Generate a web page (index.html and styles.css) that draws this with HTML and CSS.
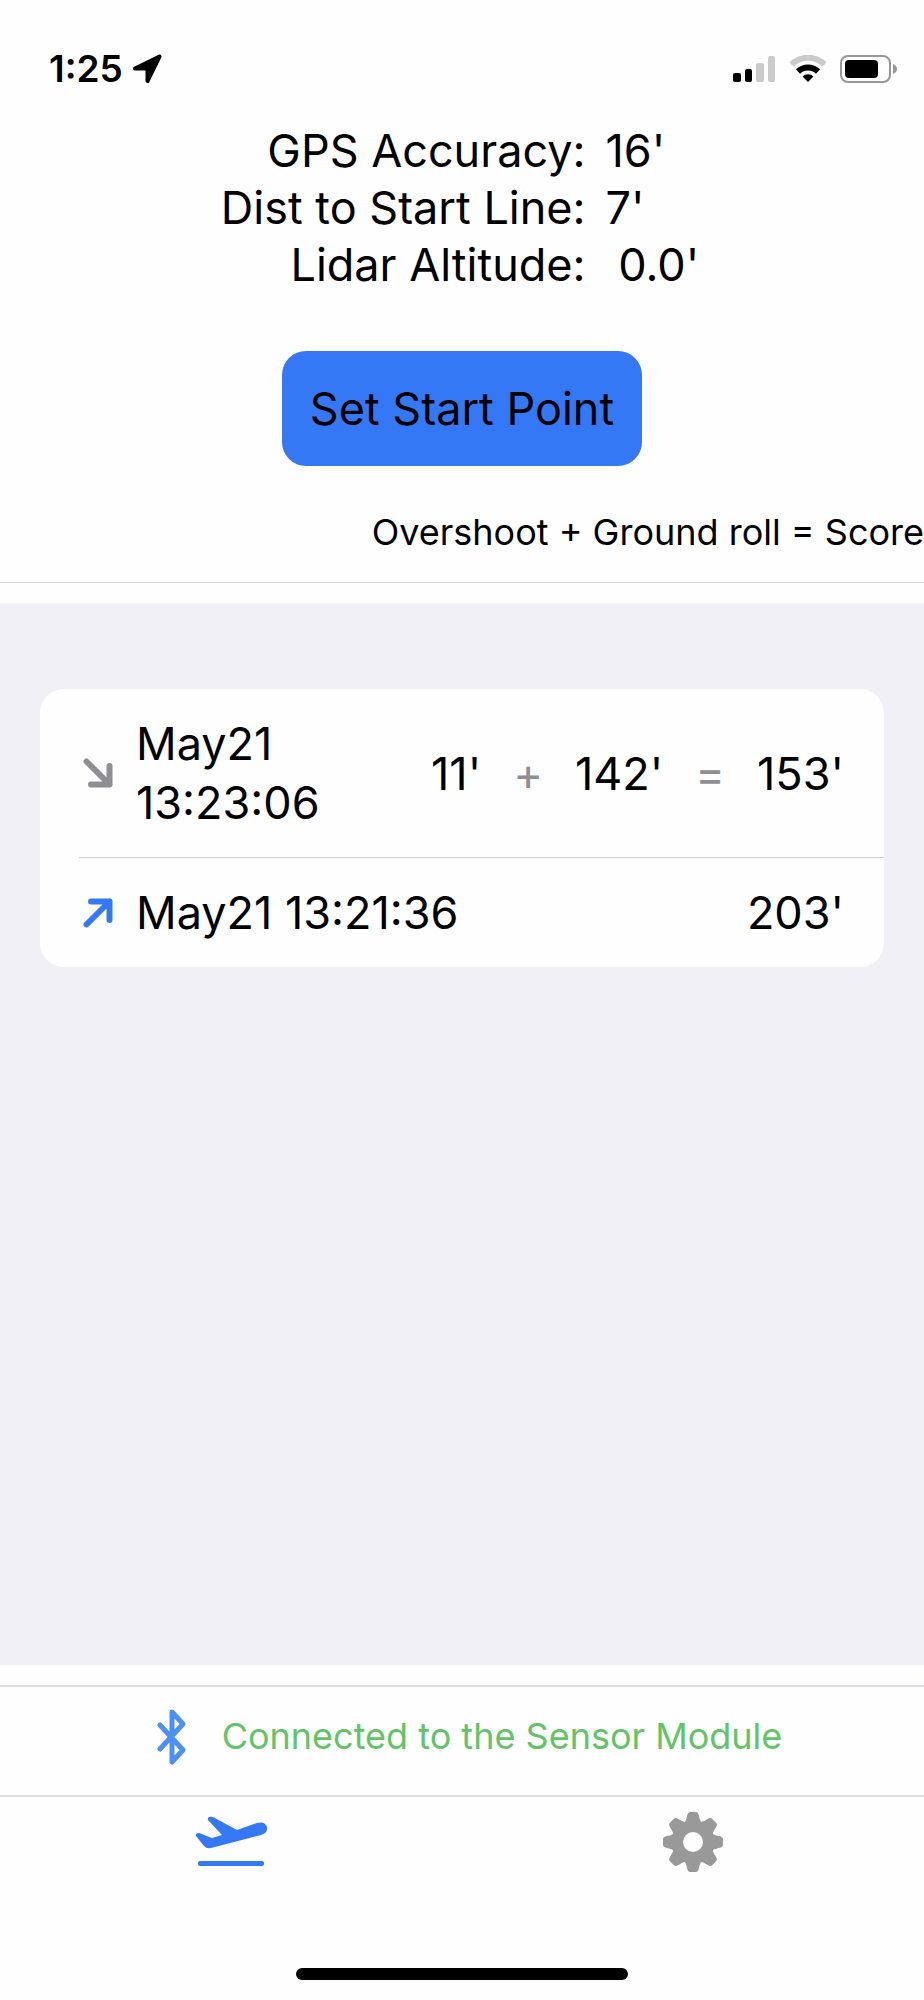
FILE: index.html
```html
<!DOCTYPE html>
<html lang="en">
<head>
  <meta charset="UTF-8">
  <meta name="viewport" content="width=device-width, initial-scale=1.0">
  <title>Landing Distance</title>
  <link rel="stylesheet" href="styles.css">
</head>
<body>
  <div class="status-bar">
    <span class="time">1:25</span>
    <svg class="location" width="30" height="30" viewBox="0 0 30 30">
      <path d="M3 14.5 L27.500 2.500 L15.500 27 V14.500 Z" fill="#000" stroke="#000" stroke-width="4" stroke-linejoin="round"/>
    </svg>
    <div class="indicators">
      <svg width="43" height="28" viewBox="0 0 43 28">
        <rect x="0" y="18" width="8" height="9" rx="2"/>
        <rect x="12" y="14" width="7" height="13" rx="2"/>
        <rect x="23" y="8" width="8" height="19" rx="2" fill="#cbcbcb"/>
        <rect x="35" y="1" width="7" height="26" rx="2" fill="#cbcbcb"/>
      </svg>
      <svg width="38" height="28" viewBox="0 0 38 28" fill="none">
        <path d="M2.500 9.500 A23.500 23.500 0 0 1 35.500 9.500" stroke="#cbcbcb" stroke-width="6"/>
        <path d="M9 16.500 A14.500 14.500 0 0 1 29 16.500" stroke="#000" stroke-width="6"/>
        <path d="M13.500 21.500 A8 8 0 0 1 24.500 21.500 L19 27 Z" fill="#000"/>
      </svg>
      <svg width="57" height="28" viewBox="0 0 57 28">
        <rect x="1" y="1" width="49" height="26" rx="7" fill="none" stroke="#979797" stroke-width="2"/>
        <rect x="5" y="5" width="33" height="18" rx="4"/>
        <path d="M53 9 Q57 11 57 14 Q57 17 53 19 Z" fill="#979797"/>
      </svg>
    </div>
  </div>

  <header>
    <dl class="stats">
      <dt>GPS Accuracy:</dt>
      <dd>16'</dd>
      <dt>Dist to Start Line:</dt>
      <dd>7'</dd>
      <dt>Lidar Altitude:</dt>
      <dd> 0.0'</dd>
    </dl>
    <button class="start-button">Set Start Point</button>
    <p class="formula">Overshoot + Ground roll = Score</p>
  </header>

  <main>
    <ul class="records">
      <li>
        <svg class="arrow landing" width="30" height="30" viewBox="0 0 30 30">
          <path d="M3.500 3.500 L26.500 26.500 M26.500 8 V26.500 H8"/>
        </svg>
        <span class="date">May21 13:23:06</span>
        <span class="value">11'</span>
        <span class="sign">+</span>
        <span class="value">142'</span>
        <span class="sign">=</span>
        <span class="value">153'</span>
      </li>
      <li>
        <svg class="arrow takeoff" width="30" height="30" viewBox="0 0 30 30">
          <path d="M3.500 26.500 L26.500 3.500 M8 3.500 H26.500 V22"/>
        </svg>
        <span class="date">May21 13:21:36</span>
        <span class="value">203'</span>
      </li>
    </ul>
  </main>

  <div class="connection">
    <svg width="32" height="56" viewBox="0 0 32 56">
      <path d="M4 16 L27 41 L16 53 V3 L27 15 L4 40" fill="none" stroke="#4a90f8" stroke-width="5" stroke-linecap="round" stroke-linejoin="round"/>
    </svg>
    <span>Connected to the Sensor Module</span>
  </div>

  <nav>
    <a href="#flights" aria-label="Flights">
      <svg width="72" height="60" viewBox="0 0 72 60">
        <path d="M1 24 Q0 21 4 21 L17 26 L27 23 L13 8 Q12 4 18 5 L42 18 L62 11 Q70 9 72 15 Q73 21 66 23 L16 36 Q12 37 9 34 Z" fill="#3478f6"/>
        <rect x="3" y="49" width="66" height="5" rx="2" fill="#3478f6"/>
      </svg>
    </a>
    <a href="#settings" aria-label="Settings">
      <svg width="60" height="60" viewBox="-30 -30 60 60">
        <g fill="#999">
          <path id="tooth" d="M-10 -18 Q-7 -20 -6 -26 Q-5 -30 -3 -30 H3 Q5 -30 6 -26 Q7 -20 10 -18 V0 H-10 Z"/>
          <use href="#tooth" transform="rotate(45)"/>
          <use href="#tooth" transform="rotate(90)"/>
          <use href="#tooth" transform="rotate(135)"/>
          <use href="#tooth" transform="rotate(180)"/>
          <use href="#tooth" transform="rotate(225)"/>
          <use href="#tooth" transform="rotate(270)"/>
          <use href="#tooth" transform="rotate(315)"/>
          <circle r="21"/>
        </g>
        <circle r="10" fill="#fefefe"/>
      </svg>
    </a>
  </nav>
  <div class="home-bar"></div>
</body>
</html>
```
FILE: styles.css
```css
* {
  box-sizing: border-box;
}

body {
  margin: 0;
  min-height: 100vh;
  display: flex;
  flex-direction: column;
  font-family: Inter, sans-serif;
  font-size: 45px;
  line-height: 57px;
  color: #000;
  background-color: #fefefe;
}

svg {
  display: block;
  flex: none;
}

.status-bar {
  display: flex;
  align-items: center;
  padding: 40px 27px 0 49px;
}

.time {
  font-size: 37px;
  font-weight: 600;
}

.location {
  margin-left: 9px;
}

.indicators {
  display: flex;
  gap: 13px;
  margin-left: auto;
}

header {
  display: flex;
  flex-direction: column;
  align-items: center;
  padding-top: 25px;
  border-bottom: 1px solid #d8d8d8;
}

.stats {
  display: grid;
  grid-template-columns: auto auto;
  column-gap: 20px;
  margin: 0;
  padding-right: 4px;
}

.stats dt {
  text-align: right;
}

.stats dd {
  margin: 0;
  white-space: pre;
}

.start-button {
  margin: 58px 0 0;
  padding: 29px 28px;
  border: none;
  border-radius: 24px;
  background-color: #3478f6;
  color: #000;
  font: inherit;
  cursor: pointer;
}

.formula {
  align-self: flex-end;
  margin: 38px 0 21px;
  font-size: 36px;
}

main {
  flex: 1;
  margin: 20px 0;
  padding: 86px 40px;
  background-color: #f1f0f6;
}

.records {
  margin: 0;
  padding: 0;
  list-style: none;
  border-radius: 24px;
  background-color: #fefefe;
  line-height: 59px;
}

.records li {
  display: flex;
  align-items: center;
  margin-left: 39px;
  padding: 25px 40px 25px 4px;
}

.records li + li {
  border-top: 1px solid #d0d0d2;
}

.arrow {
  margin-right: 23px;
  fill: none;
  stroke-width: 6;
  stroke-linecap: round;
  stroke-linejoin: round;
}

.landing {
  stroke: #8e8e93;
}

.takeoff {
  stroke: #3478f6;
}

.date {
  flex: 1;
}

.sign {
  margin: 0 32px;
  color: #8e8e93;
}

.connection {
  display: flex;
  align-items: center;
  justify-content: center;
  gap: 34px;
  padding: 21px 0 30px 14px;
  border-top: 2px solid #dfdfdf;
  border-bottom: 2px solid #dfdfdf;
  font-size: 36px;
  color: #62c466;
}

nav {
  display: flex;
  padding-top: 15px;
}

nav a {
  flex: 1;
  display: flex;
  justify-content: center;
}

.home-bar {
  width: 36%;
  height: 12px;
  margin: 96px auto 20px;
  border-radius: 6px;
  background-color: #000;
}
```
